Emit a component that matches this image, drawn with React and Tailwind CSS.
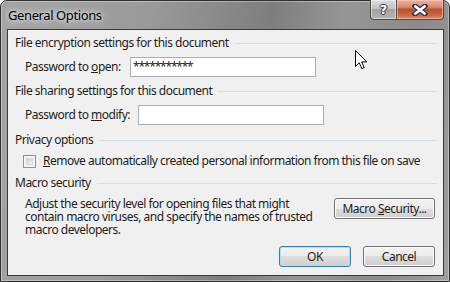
import React from 'react';

const FONT = "font-['Segoe_UI','Noto_Sans',sans-serif]";

function Heading({ children, gap = 'ml-[6px]', className = '' }) {
  return (
    <div className={`flex items-center h-[16px] ${className}`}>
      <span className="whitespace-nowrap">{children}</span>
      <div className={`flex-1 h-px bg-[#d5dfe5] ${gap}`} />
    </div>
  );
}

function Btn({ children, primary, className = '' }) {
  return (
    <button
      className={`h-[21px] shrink-0 rounded-[3px] border text-[12px] leading-none text-[#1e1e1e] bg-[linear-gradient(to_bottom,#f2f2f2_0%,#ebebeb_50%,#dddddd_50%,#cfcfcf_100%)] ${
        primary
          ? 'border-[#3c7fb1] shadow-[inset_0_0_0_1px_#a9def9]'
          : 'border-[#707070] shadow-[inset_0_0_0_1px_#fcfcfc]'
      } ${className}`}
    >
      {children}
    </button>
  );
}

function TextBox({ width, children }) {
  return (
    <div
      className={`${width} h-[20px] shrink-0 bg-white border border-[#abadb3] flex items-center pl-[2px] text-[12px] tracking-[-1.2px]`}
    >
      {children}
    </div>
  );
}

export default function App() {
  return (
    <div className={`relative w-[450px] h-[282px] ${FONT} text-[12px] tracking-[-0.5px] text-[#1e1e1e]`}>
      <div className="flex flex-col h-full rounded-t-[7px] border border-[#2f2f2f] bg-[linear-gradient(100deg,#a4a4a4_0%,#9a9a9a_30%,#7e7e7e_55%,#969696_70%,#8a8a8a_85%,#9e9e9e_100%)] shadow-[inset_0_0_0_1px_rgba(255,255,255,0.35)]">
        {/* Title bar */}
        <div className="h-[28px] flex items-start shrink-0">
          <span className="pl-[7px] pt-[6px] text-[13px] leading-[16px] tracking-[-0.4px] text-black [text-shadow:0_0_8px_rgba(255,255,255,0.9),0_0_4px_rgba(255,255,255,0.8)]">
            General Options
          </span>
          <div className="ml-auto mr-[5px] -mt-px flex">
            <div className="w-[27px] h-[20px] rounded-bl-[4px] border border-t-0 border-[#4b4b4b] bg-[linear-gradient(to_bottom,#dcdcdc_0%,#c2c2c2_45%,#a3a3a3_50%,#b4b4b4_100%)] shadow-[inset_0_0_0_1px_rgba(255,255,255,0.45)] flex items-center justify-center">
              <span className="font-['DejaVu_Sans',sans-serif] font-bold text-[13px] leading-none tracking-normal text-white [text-shadow:-1px_0_#2f3650,1px_0_#2f3650,0_-1px_#2f3650,0_1px_#2f3650]">
                ?
              </span>
            </div>
            <div className="w-[47px] h-[20px] rounded-br-[4px] border border-t-0 border-l-0 border-[#4b4b4b] bg-[linear-gradient(to_bottom,#e9b3a0_0%,#de8c6e_35%,#b9522d_50%,#c8623c_75%,#e08a66_100%)] shadow-[inset_0_0_0_1px_rgba(255,220,200,0.5)] flex items-center justify-center">
              <svg width="16" height="12" viewBox="0 0 16 12">
                <path d="M3 2 L13 10 M13 2 L3 10" stroke="#2f3650" strokeWidth="5" strokeLinecap="square" />
                <path d="M3.5 2.5 L12.5 9.5 M12.5 2.5 L3.5 9.5" stroke="#ffffff" strokeWidth="2.6" strokeLinecap="square" />
              </svg>
            </div>
          </div>
        </div>

        {/* Client area */}
        <div className="flex-1 ml-[6px] mr-[5px] mb-[5px] border border-[#3a3a3a] bg-[#f0f0f0] flex flex-col pl-[7px] pr-[6px]">
          <Heading className="mt-[5px]">File encryption settings for this document</Heading>
          <div className="mt-[6px] h-[20px] flex items-center pl-[10px]">
            <span className="w-[105px] shrink-0 whitespace-nowrap">
              Password to <span className="underline">o</span>pen:
            </span>
            <TextBox width="w-[186px]">***********</TextBox>
          </div>

          <Heading className="mt-[6px]">File sharing settings for this document</Heading>
          <div className="mt-[6px] h-[20px] flex items-center pl-[10px]">
            <span className="w-[113px] shrink-0 whitespace-nowrap">
              Password to <span className="underline">m</span>odify:
            </span>
            <TextBox width="w-[186px]" />
          </div>

          <Heading className="mt-[7px]">Privacy options</Heading>
          <div className="mt-[5px] h-[16px] flex items-center pl-[8px]">
            <div className="w-[13px] h-[13px] shrink-0 border border-[#8f8f8f] bg-[#f4f4f4] p-[2px]">
              <div className="w-full h-full bg-[linear-gradient(135deg,#cbcbcb,#f6f6f6)] border border-[#d8d8d8]" />
            </div>
            <span className="ml-[7px] whitespace-nowrap">
              <span className="underline">R</span>emove automatically created personal information from this file on save
            </span>
          </div>

          <Heading className="mt-[6px]">Macro security</Heading>
          <div className="mt-[6px] flex items-start">
            <div className="pl-[10px] whitespace-nowrap">
              <div className="h-[13px] leading-[13px]">Adjust the security level for opening files that might</div>
              <div className="h-[13px] leading-[13px]">contain macro viruses, and specify the names of trusted</div>
              <div className="h-[13px] leading-[13px]">macro developers.</div>
            </div>
            <Btn className="ml-auto mr-[2px] mt-px w-[101px]">
              Macro <span className="underline">S</span>ecurity...
            </Btn>
          </div>

          <div className="mt-auto mb-[8px] mr-[2px] flex justify-end gap-[12px]">
            <Btn primary className="w-[72px]">OK</Btn>
            <Btn className="w-[72px]">Cancel</Btn>
          </div>
        </div>
      </div>

      {/* Mouse pointer */}
      <svg className="absolute left-[355px] top-[50px]" width="13" height="20" viewBox="0 0 13 20">
        <path
          d="M0.5 0.5 V16.5 L4.3 12.8 L6.8 18.6 L9.2 17.6 L6.7 11.9 H11.8 Z"
          fill="#ffffff"
          stroke="#000000"
          strokeWidth="1"
          strokeLinejoin="miter"
        />
      </svg>
    </div>
  );
}
